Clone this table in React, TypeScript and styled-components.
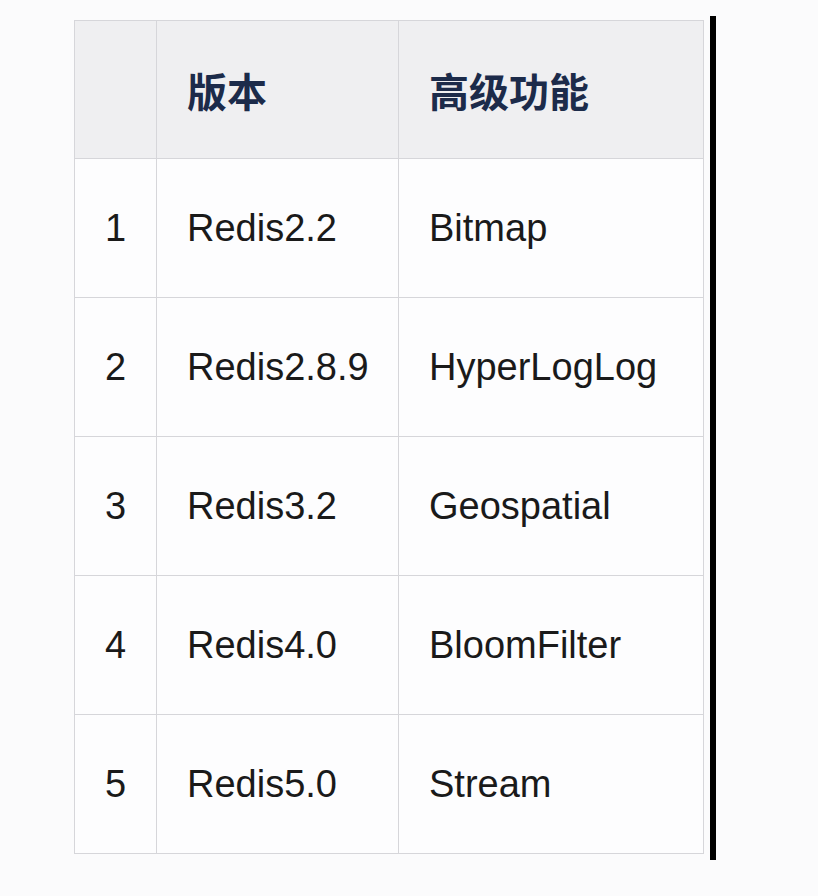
import styled, { createGlobalStyle } from "styled-components";

const GlobalStyle = createGlobalStyle`
  html, body {
    margin: 0;
    padding: 0;
    background: #fbfbfc;
  }
`;

const Page = styled.div`
  display: flex;
  align-items: flex-start;
  padding: 16px 0 0 74px;
  font-family: "Liberation Sans", "Noto Sans CJK SC", sans-serif;
`;

const Table = styled.table`
  margin-top: 4px;
  width: 629px;
  border-collapse: collapse;
  table-layout: fixed;
  background: #fdfdfe;
`;

const HeadCell = styled.th<{ $w: number }>`
  width: ${(p) => p.$w}px;
  height: 138px;
  padding: 0 0 0 30px;
  background: #efeff1;
  border: 1px solid #d6d6da;
  text-align: left;
  font-family: "Noto Sans CJK SC", sans-serif;
  font-size: 40px;
  font-weight: 700;
  color: #1c2b4a;
  box-sizing: border-box;
`;

const Cell = styled.td<{ $center?: boolean }>`
  height: 139px;
  padding: 0 0 0 ${(p) => (p.$center ? 0 : 30)}px;
  border: 1px solid #d6d6da;
  text-align: ${(p) => (p.$center ? "center" : "left")};
  font-size: 38px;
  color: #1a1a1a;
  box-sizing: border-box;
`;

const Bar = styled.div`
  width: 6px;
  height: 844px;
  margin-left: 6px;
  background: #000;
`;

const rows = [
  ["1", "Redis2.2", "Bitmap"],
  ["2", "Redis2.8.9", "HyperLogLog"],
  ["3", "Redis3.2", "Geospatial"],
  ["4", "Redis4.0", "BloomFilter"],
  ["5", "Redis5.0", "Stream"],
];

const App: React.FC = () => {
  return (
    <>
      <GlobalStyle />
      <Page>
        <Table>
          <thead>
            <tr>
              <HeadCell $w={82}></HeadCell>
              <HeadCell $w={242}>版本</HeadCell>
              <HeadCell $w={305}>高级功能</HeadCell>
            </tr>
          </thead>
          <tbody>
            {rows.map((r) => (
              <tr key={r[0]}>
                <Cell $center>{r[0]}</Cell>
                <Cell>{r[1]}</Cell>
                <Cell>{r[2]}</Cell>
              </tr>
            ))}
          </tbody>
        </Table>
        <Bar />
      </Page>
    </>
  );
};

export default App;
